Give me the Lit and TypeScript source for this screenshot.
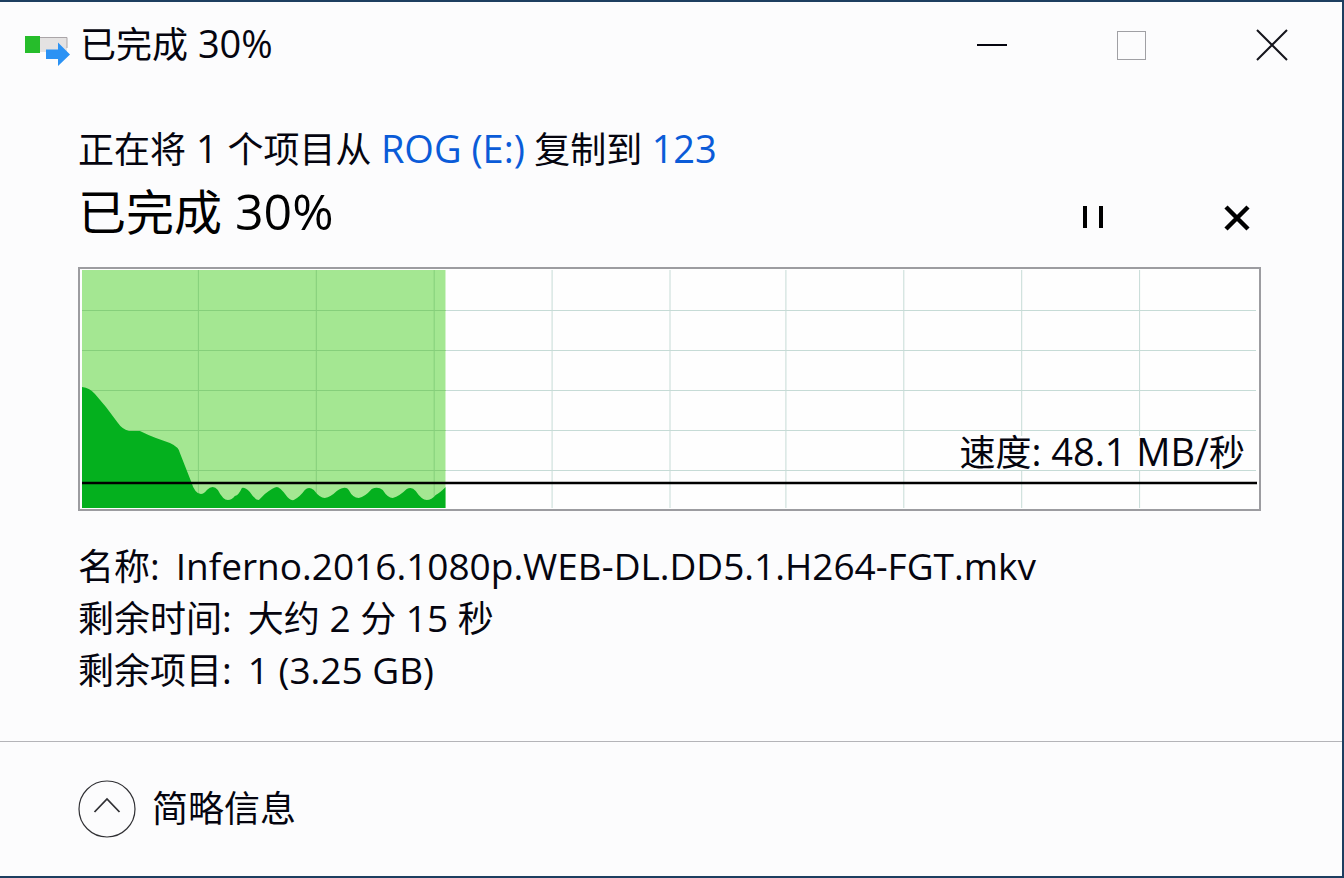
import { LitElement, html, svg, css } from "lit";
import { customElement, property } from "lit/decorators.js";

// Wraps Latin runs so they can be set slightly larger than the Chinese text.
const mixed = (text: string) =>
  (text.match(/[\x20-\x7e]+|[^\x20-\x7e]+/g) ?? []).map((run) =>
    /[\x21-\x7e]/.test(run) ? html`<span class="latin">${run}</span>` : run
  );

@customElement("speed-chart")
class SpeedChart extends LitElement {
  @property() label = "";

  static styles = css`
    :host {
      display: block;
      position: relative;
      border: 2px solid #9c9ca0;
      padding: 1px 2px;
      background: #fefefe;
    }
    .plot {
      display: block;
      width: 100%;
      height: 238px;
    }
    .label {
      position: absolute;
      right: 14px;
      bottom: 39px;
      line-height: 34px;
      white-space: nowrap;
      background: #fefefe;
    }
    .latin {
      font-size: 38px;
      line-height: 1px;
    }
  `;

  render() {
    const columns = [116.5, 234.5, 352.5, 470.5, 588.5, 704.5, 822.5, 940.5, 1058.5];
    const rows = [41.5, 81.5, 121.5, 161.5, 201.5];
    const grid = (color: string) => svg`
      ${columns.map((x) => svg`<line x1=${x} x2=${x} y1="0" y2="240" stroke=${color} />`)}
      ${rows.map((y) => svg`<line x1="0" x2="1175" y1=${y} y2=${y} stroke=${color} />`)}
    `;
    return html`
      <svg class="plot" viewBox="0 1 1176 238" preserveAspectRatio="none" aria-hidden="true">
        ${grid("#c6dbd6")}
        <svg x="0" y="0" width="364" height="239" viewBox="0 0 364 239" preserveAspectRatio="none">
          <rect width="364" height="239" fill="#a4e792" />
          ${grid("#86cf7a")}
          <path
            fill="#04b01e"
            d="M0 118 Q8 119 13 125 L24 138 L36 154 Q40 160 47 162 H58 Q66 166 74 169 L88 174 Q97 178 98 184 L109 212 Q113 225 119 225 Q122 225 125 221 Q131 215 136 221 Q141 231 146 231 Q150 231 153 227 Q157 226 160 219 Q163 218 168 223 Q173 231 177 231 L183 225 Q192 218 195 218 Q198 218 204 226 Q208 232 212 231 Q218 228 223 221 Q227 217 232 221 Q238 229 243 229 Q249 228 255 222 Q264 216 267 221 Q271 229 277 229 Q283 228 290 220 Q296 217 301 221 Q306 229 311 229 Q318 227 325 220 Q330 217 334 222 Q340 231 345 231 Q350 231 354 226 Q358 224 364 218 V239 H0 Z"
          />
        </svg>
        <line x1="0" x2="1176" y1="214" y2="214" stroke="#000" stroke-width="2.4" />
      </svg>
      <div class="label">${mixed(this.label)}</div>
    `;
  }
}

@customElement("app-root")
class AppRoot extends LitElement {
  static styles = css`
    :host {
      display: flex;
      flex-direction: column;
      box-sizing: border-box;
      min-height: 100vh;
      border: solid #1d3e60;
      border-width: 2px 2px 2px 0;
      background: #fcfcfd;
      color: #05050f;
      font: 36px/52px "Open Sans", "Noto Sans CJK SC", sans-serif;
    }
    .latin {
      font-size: 38px;
      line-height: 1px;
    }
    button {
      display: flex;
      align-items: center;
      justify-content: center;
      padding: 0;
      border: 0;
      background: none;
      color: inherit;
      font: inherit;
    }
    svg {
      display: block;
    }
    .titlebar {
      display: flex;
      align-items: center;
      height: 86px;
      padding-left: 24px;
    }
    .titlebar h1 {
      flex: 1;
      margin: 0 0 0 10px;
      font: inherit;
    }
    .titlebar button {
      width: 140px;
      height: 86px;
    }
    main {
      flex: 1;
      padding: 36px 81px 0 78px;
    }
    p {
      margin: 0;
    }
    a {
      color: #0a5bd8;
      text-decoration: none;
    }
    .status {
      display: flex;
      align-items: flex-end;
      height: 72px;
    }
    .status h2 {
      flex: 1;
      margin: 0;
      font-size: 48px;
      line-height: 72px;
      font-weight: 400;
      color: #000;
    }
    .status h2 .latin {
      font-size: 50px;
    }
    .status button {
      width: 48px;
      height: 60px;
    }
    .actions {
      display: flex;
      gap: 96px;
    }
    speed-chart {
      margin-top: 19px;
    }
    dl {
      margin: 30px 0 0;
    }
    dl div {
      display: flex;
      gap: 16px;
    }
    dl .latin {
      font-size: 37px;
    }
    dd {
      margin: 0;
    }
    footer {
      padding: 38px 78px;
      border-top: 1px solid #b4b4b8;
    }
    footer button {
      gap: 16px;
    }
  `;

  render() {
    return html`
      <header class="titlebar">
        <svg width="46" height="42" viewBox="0 0 46 42" aria-hidden="true">
          <rect x="15" y="13" width="28" height="15" fill="#e4e2e2" />
          <path d="M15 13.500H43V24" fill="none" stroke="#aaa5a8" />
          <rect x="1" y="12" width="15" height="17" fill="#26bd2b" />
          <path d="M22 25.500H34V18.500L46 30.500L34 42V35H22Z" fill="#2b92f4" />
        </svg>
        <h1>${mixed("已完成 30%")}</h1>
        <button aria-label="最小化">
          <svg width="32" height="32"><path d="M1 16H31" stroke="#05050f" stroke-width="2" /></svg>
        </button>
        <button aria-label="最大化" disabled>
          <svg width="32" height="32"><rect x="1.500" y="2.500" width="28" height="28" fill="none" stroke="#a0a0a4" /></svg>
        </button>
        <button aria-label="关闭">
          <svg width="32" height="32"><path d="M1 1L31 31M31 1L1 31" stroke="#15151c" stroke-width="2" /></svg>
        </button>
      </header>
      <main>
        <p>${mixed("正在将 1 个项目从 ")}<a href="#source">${mixed("ROG (E:)")}</a> ${mixed("复制到 ")}<a href="#target">${mixed("123")}</a></p>
        <div class="status">
          <h2>${mixed("已完成 30%")}</h2>
          <div class="actions">
            <button aria-label="暂停">
              <svg width="24" height="24"><path d="M4 0V22M20 0V22" stroke="#000" stroke-width="4" /></svg>
            </button>
            <button aria-label="取消">
              <svg width="26" height="26"><path d="M2 2L24 24M24 2L2 24" stroke="#000" stroke-width="4.500" /></svg>
            </button>
          </div>
        </div>
        <speed-chart label="速度: 48.1 MB/秒"></speed-chart>
        <dl>
          <div><dt>${mixed("名称:")}</dt><dd>${mixed("Inferno.2016.1080p.WEB-DL.DD5.1.H264-FGT.mkv")}</dd></div>
          <div><dt>${mixed("剩余时间:")}</dt><dd>${mixed("大约 2 分 15 秒")}</dd></div>
          <div><dt>${mixed("剩余项目:")}</dt><dd>${mixed("1 (3.25 GB)")}</dd></div>
        </dl>
      </main>
      <footer>
        <button>
          <svg width="58" height="58" fill="none" stroke="#303034"><circle cx="29" cy="29" r="28" stroke-width="1.200" /><path d="M16.500 32L29 19L41.500 32" stroke-width="1.800" /></svg>
          简略信息
        </button>
      </footer>
    `;
  }
}
